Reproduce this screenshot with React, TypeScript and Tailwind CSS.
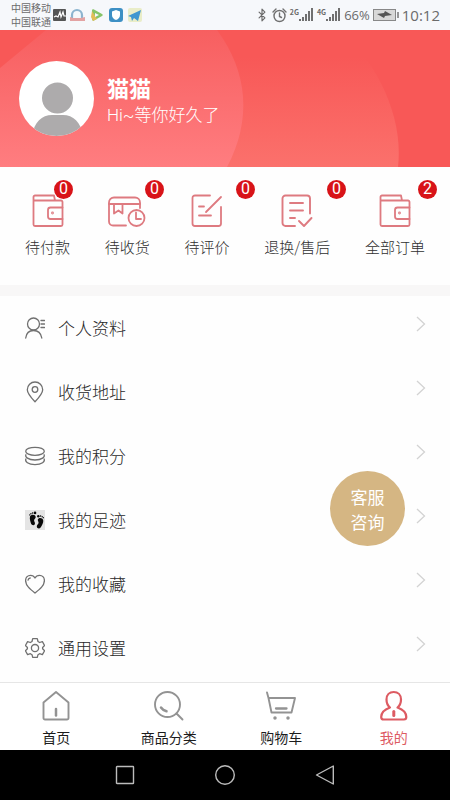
import type { ReactNode } from 'react';
import { Bluetooth } from 'lucide-react';

function WalletIcon() {
  return (
    <svg width="32" height="34" viewBox="0 0 32 34" fill="none" stroke="#de7a80" strokeWidth="1.8" strokeLinejoin="round" strokeLinecap="round">
      <path d="M1.5 6.5V30.500a1.500 1.500 0 0 0 1.500 1.500H29a1.500 1.500 0 0 0 1.500-1.500V8a1.500 1.500 0 0 0-1.500-1.500H1.500V3a1.500 1.500 0 0 1 1.500-1.500H22l1 5" />
      <path d="M30.500 13.500H18.500a2.500 2.500 0 0 0-2.500 2.500v6.500a2.500 2.500 0 0 0 2.500 2.500h12" />
      <circle cx="20.500" cy="19" r="0.500" />
    </svg>
  );
}

function PackageIcon() {
  return (
    <svg width="38" height="34" viewBox="0 0 38 34" fill="none" stroke="#de7a80" strokeWidth="1.8" strokeLinejoin="round" strokeLinecap="round">
      <path d="M18 31.500H5a4 4 0 0 1-4-4V8.500a5 5 0 0 1 5-5h21a5 5 0 0 1 5 5V14" />
      <path d="M1 10h31M6 10v9.500l4.500-3 4 3V10" />
      <circle cx="28.500" cy="24" r="8" />
      <path d="M28 18.500V25h5" />
    </svg>
  );
}

function ReviewIcon() {
  return (
    <svg width="32" height="34" viewBox="0 0 32 34" fill="none" stroke="#de7a80" strokeWidth="1.8" strokeLinejoin="round" strokeLinecap="round">
      <path d="M19 1.500H4A2.500 2.500 0 0 0 1.500 4v25.500A2.500 2.500 0 0 0 4 32h23.500a2.500 2.500 0 0 0 2.500-2.500V13" />
      <path d="M30 3 15 18M8 12.500h5M8 21.500h12" />
    </svg>
  );
}

function RefundIcon() {
  return (
    <svg width="32" height="34" viewBox="0 0 32 34" fill="none" stroke="#de7a80" strokeWidth="1.9" strokeLinejoin="round" strokeLinecap="round">
      <path d="M14 32H4.500A3 3 0 0 1 1.500 29V4.500a3 3 0 0 1 3-3H26a3 3 0 0 1 3 3v15" />
      <path d="M9 9h13M9 16.500h13M9 24h5M18 27l5 5 7.500-8" />
    </svg>
  );
}

function ProfileIcon() {
  return (
    <svg width="20" height="22" viewBox="0 0 20 22" fill="none" stroke="#707070" strokeWidth="1.300" strokeLinecap="round">
      <circle cx="8.500" cy="7" r="6" />
      <path d="M.700 21c.600-4.500 3-7.500 7.800-7.500s7.500 3 8.300 7.500M16 3.500h3.500M16 7h3.500M16 10.500h3.500" />
    </svg>
  );
}

function PinIcon() {
  return (
    <svg width="20" height="22" viewBox="0 0 20 22" fill="none" stroke="#707070" strokeWidth="1.300" strokeLinejoin="round">
      <path d="M10 20.800C6 16.500 2.300 12.500 2.300 8.700a7.700 7.700 0 0 1 15.400 0c0 3.800-3.700 7.800-7.700 12.100Z" />
      <circle cx="10" cy="8.500" r="2.800" />
    </svg>
  );
}

function CoinsIcon() {
  return (
    <svg width="20" height="20" viewBox="0 0 20 20" fill="none" stroke="#707070" strokeWidth="1.300">
      <ellipse cx="10" cy="5.300" rx="9.300" ry="4" />
      <path d="M1.200 8.300C-.800 11 3.500 14 10 14s10.800-3 8.800-5.700" />
      <path d="M1.200 12.500C-.800 15.500 3.500 18.600 10 18.600s10.800-3.100 8.800-6.100" />
    </svg>
  );
}

function FootprintIcon() {
  return (
    <svg width="20" height="20" viewBox="0 0 20 20" fill="#0a0a0a">
      <rect width="20" height="20" fill="#e4e4e4" />
      <path d="M5 6.500c1-2.500 5.500-2.300 5.700.500.100 1.600-1.700 2-1.600 3.600.100 1.300 1.300 2.300.700 3.700-.800 1.600-3.200 1-3.700-.500C5.600 11.900 4.300 9 5 6.500Z" />
      <path d="M18.200 10c-.600-2.600-5-2.800-5.400-.400-.200 1.500 1.200 2.300.700 3.700-.400 1.200-1.900 1.900-1.700 3.500.300 1.900 2.700 2.300 3.800.700 1.200-1.800 3.200-4.800 2.600-7.500Z" />
      <circle cx="10" cy="2.900" r="1.300" />
      <circle cx="7.600" cy="3" r=".8" />
      <circle cx="5.900" cy="3.700" r=".7" />
      <circle cx="4.700" cy="4.900" r=".6" />
      <circle cx="13.300" cy="6.200" r="1.200" />
      <circle cx="15.600" cy="6" r=".8" />
      <circle cx="17.200" cy="6.700" r=".7" />
      <circle cx="18.400" cy="7.700" r=".6" />
    </svg>
  );
}

function HeartIcon() {
  return (
    <svg width="20" height="20" viewBox="0 0 20 20" fill="none" stroke="#707070" strokeWidth="1.300" strokeLinejoin="round" strokeLinecap="round">
      <path d="M10 19C5 15 .600 11.500.600 6.500c0-3 2.200-5.200 4.900-5.200 2 0 3.600 1 4.500 2.700.900-1.700 2.500-2.700 4.500-2.700 2.700 0 4.900 2.200 4.900 5.200C19.400 11.500 15 15 10 19Z" />
      <path d="M3 6.200C3.200 5 4 4.200 5.200 4" />
    </svg>
  );
}

function GearIcon() {
  return (
    <svg width="20" height="20" viewBox="0 0 20 20" fill="none" stroke="#707070" strokeWidth="1.300" strokeLinejoin="round">
      <path d="M7.700.700h4.600l.700 2.800 1.600 1 2.800-.900 2.200 3.900-2 2v1.200l2 2-2.200 3.900-2.800-.900-1.600 1-.700 2.700H7.700L7 16.700l-1.600-1-2.800.900L.400 12.700l2-2V9.500l-2-2 2.200-3.900 2.800.900 1.600-1Z" />
      <circle cx="10" cy="10.100" r="3.600" />
    </svg>
  );
}

function HomeIcon() {
  return (
    <svg width="30" height="32" viewBox="0 0 30 32" fill="none" stroke="#939393" strokeWidth="1.900" strokeLinejoin="round" strokeLinecap="round">
      <path d="M2.500 12.500 15 2l12.500 10.500V28a1.500 1.500 0 0 1-1.500 1.500H4A1.500 1.500 0 0 1 2.500 28Z" />
      <path d="M15 19v6.500" strokeWidth="2.500" />
    </svg>
  );
}

function SearchIcon() {
  return (
    <svg width="30" height="32" viewBox="0 0 30 32" fill="none" stroke="#939393" strokeWidth="1.900" strokeLinecap="round">
      <circle cx="13.500" cy="14.500" r="12.500" />
      <path d="m22.500 23.500 6 6" />
      <path d="M7 17.500c1.200 1.800 3 3 5.500 3.800" strokeWidth="2.500" />
    </svg>
  );
}

function CartIcon() {
  return (
    <svg width="30" height="32" viewBox="0 0 30 32" fill="none" stroke="#939393" strokeWidth="1.900" strokeLinejoin="round" strokeLinecap="round">
      <path d="M1 2.500 2.500 8H29l-3.500 14.500H5.500L2.500 8" />
      <path d="M10 18.500h10.500" strokeWidth="2.300" />
      <circle cx="9" cy="28" r=".8" fill="#939393" />
      <circle cx="22" cy="28" r=".8" fill="#939393" />
    </svg>
  );
}

function MineIcon() {
  return (
    <svg width="30" height="32" viewBox="0 0 30 32" fill="none" stroke="#dd5b62" strokeWidth="2.200" strokeLinejoin="round" strokeLinecap="round">
      <path d="M11 17.500C8.500 15.500 7.500 12.500 7.500 9.500c0-4.500 3-7.500 7.200-7.500S22 5 22 9.500c0 3-1 6-3.500 8 5.500 2 8.800 5.500 8.800 9.500 0 1.700-.800 2.500-2.300 2.500H4.500c-1.500 0-2.300-.800-2.300-2.500 0-4 3.300-7.500 8.800-9.500Z" />
      <path d="M14.800 21.500v4" strokeWidth="3" />
    </svg>
  );
}

const orders = [
  { label: '待付款', count: 0, icon: <WalletIcon /> },
  { label: '待收货', count: 0, icon: <PackageIcon /> },
  { label: '待评价', count: 0, icon: <ReviewIcon /> },
  { label: '退换/售后', count: 0, icon: <RefundIcon /> },
  { label: '全部订单', count: 2, icon: <WalletIcon /> },
];

const menu: { label: string; icon: ReactNode }[] = [
  { label: '个人资料', icon: <ProfileIcon /> },
  { label: '收货地址', icon: <PinIcon /> },
  { label: '我的积分', icon: <CoinsIcon /> },
  { label: '我的足迹', icon: <FootprintIcon /> },
  { label: '我的收藏', icon: <HeartIcon /> },
  { label: '通用设置', icon: <GearIcon /> },
];

const tabs = [
  { label: '首页', icon: <HomeIcon />, active: false },
  { label: '商品分类', icon: <SearchIcon />, active: false },
  { label: '购物车', icon: <CartIcon />, active: false },
  { label: '我的', icon: <MineIcon />, active: true },
];

function Signal({ network }: { network: string }) {
  return (
    <div className="flex items-start">
      <span className="text-[7px] font-bold leading-[8px]">{network}</span>
      <svg width="15" height="14" viewBox="0 0 15 14" fill="#707070">
        <rect x="0" y="11" width="2" height="2" />
        <rect x="3" y="9" width="2" height="4" />
        <rect x="6" y="6" width="2" height="7" />
        <rect x="9" y="3" width="2" height="10" />
        <rect x="12" y="0" width="2" height="13" />
      </svg>
    </div>
  );
}

function StatusBar() {
  return (
    <div className="flex h-[30px] items-center justify-between bg-[#f6f8fb] pl-[11px] pr-[10px] text-[#6b6b6b]">
      <div className="flex items-center gap-[2px]">
        <div className="text-[10px] leading-[14px]">
          <p>中国移动</p>
          <p>中国联通</p>
        </div>
        <svg width="92" height="16" viewBox="0 0 92 16" fill="none">
          <rect x="0" y="2" width="13" height="12" rx="1" fill="#555" />
          <path d="m1 10 2-1 2 1 2-5 1 5 2-5 1 4h2" stroke="#fff" strokeWidth="1.200" />
          <path d="M19 11V8a5 5 0 0 1 10 0v3" stroke="#8db4cf" strokeWidth="2.200" />
          <path d="m17 10 3 1 8 0 4-1v4H17Z" fill="#e3a3a3" />
          <path d="M39 3.500c0-1 1-1.500 2-1l8 4.500c1 .500 1 1.500 0 2l-8 4.500c-1 .500-2 0-2-1Z" fill="#86c468" />
          <path d="M39 4 38 10l2 4 4-2" fill="#e2bd57" />
          <path d="M42 6v4l4-2Z" fill="#f6f8fb" />
          <rect x="56" y="1" width="14" height="14" rx="3" fill="#3c8fc4" />
          <path d="m63 3 4 1.500V8c0 2.500-1.500 4-4 5-2.500-1-4-2.500-4-5V4.500Z" fill="#fff" />
          <rect x="75" y="1" width="14" height="14" rx="2" fill="#e9edc8" />
          <path d="m75 9 13-6-3 11-4-3-2 3-1-4Z" fill="#3f97d0" />
        </svg>
      </div>
      <div className="flex items-center gap-[3px]">
        <Bluetooth size={14} strokeWidth={2} />
        <svg width="15" height="15" viewBox="0 0 15 15" fill="none" stroke="#707070" strokeWidth="1.400" strokeLinecap="round">
          <circle cx="7.500" cy="8" r="5.500" />
          <path d="M7.500 5v3.500l2 1M1 4l3-3M14 4l-3-3" />
        </svg>
        <Signal network="2G" />
        <Signal network="4G" />
        <span className="font-['Open_Sans','Noto_Sans_CJK_SC',sans-serif] text-[13px] leading-4">66%</span>
        <svg width="26" height="12" viewBox="0 0 26 12" fill="none">
          <rect x=".500" y=".500" width="22" height="11" fill="#d8d8d8" stroke="#888" />
          <path d="m4 5 7-1 1-2 7 4-7 1-1 2Z" fill="#555" />
          <path d="M25 3v6" stroke="#777" strokeWidth="1.500" />
        </svg>
        <span className="font-['Open_Sans','Noto_Sans_CJK_SC',sans-serif] text-[15px] leading-4">10:12</span>
      </div>
    </div>
  );
}

function ProfileHeader() {
  return (
    <header className="relative h-[137px] bg-[#f85857] text-white">
      <svg className="absolute inset-0 h-full w-full" viewBox="0 0 450 137" preserveAspectRatio="none">
        <defs>
          <linearGradient id="near" x1="0" y1="0" x2="0" y2="1">
            <stop offset="0" stopColor="#f75f60" />
            <stop offset="1" stopColor="#ff7d80" />
          </linearGradient>
          <linearGradient id="far" x1="0" y1="0" x2="0" y2="1">
            <stop offset="0.200" stopColor="#f85857" />
            <stop offset="1" stopColor="#fb716c" />
          </linearGradient>
        </defs>
        <path d="M220 0H340C375 30 404 85 398 137H220Z" fill="url(#far)" />
        <path d="M0 38 46 0H217C248 42 252 90 227 137H0Z" fill="url(#near)" />
      </svg>
      <div className="relative flex items-start gap-[13px] pl-[19px] pt-[31px]">
        <svg width="75" height="75" viewBox="0 0 75 75">
          <defs>
            <clipPath id="avatar">
              <circle cx="37.500" cy="37.500" r="37.500" />
            </clipPath>
          </defs>
          <g clipPath="url(#avatar)">
            <rect width="75" height="75" fill="#fff" />
            <circle cx="38.500" cy="37" r="15.500" fill="#adabac" />
            <path d="M13 75c2-14 10-21 20-21h11c10 0 18 7 20 21Z" fill="#adabac" />
          </g>
        </svg>
        <div className="pt-3">
          <h1 className="text-[22px] font-bold leading-7">猫猫</h1>
          <p className="font-[Roboto,'Noto_Sans_CJK_SC',sans-serif] text-[17px] font-light leading-7">Hi~等你好久了</p>
        </div>
      </div>
    </header>
  );
}

function OrderBar() {
  return (
    <section className="relative pb-[26px] pt-[27px]">
      <div className="flex justify-between px-[25px]">
        {orders.map((order) => (
          <button key={order.label} type="button" className="flex flex-col items-center gap-[7px] text-[15px] font-light leading-6 text-[#303030]">
            {order.icon}
            {order.label}
          </button>
        ))}
      </div>
      {/* Order counters */}
      <div className="pointer-events-none absolute inset-x-0 top-[13px] flex justify-between pl-[54px] pr-[13px]">
        {orders.map((order) => (
          <span key={order.label} className="flex size-[19px] justify-center rounded-full bg-[#d81318] font-[Roboto,sans-serif] text-[16px] leading-[18px] text-white">
            {order.count}
          </span>
        ))}
      </div>
    </section>
  );
}

function Menu() {
  return (
    <section className="relative flex-1">
      <ul>
        {menu.map((item) => (
          <li key={item.label}>
            <a href="#" className="flex h-16 items-center pl-[25px] pr-6 text-[17px] font-light text-[#282828]">
              <span className="mr-[13px] flex w-5 justify-center">{item.icon}</span>
              <span className="flex-1">{item.label}</span>
              <svg className="mb-[9px]" width="10" height="16" viewBox="0 0 10 16" fill="none" stroke="#d3d3d3" strokeWidth="1.300">
                <path d="m1 1 7.500 7L1 15" />
              </svg>
            </a>
          </li>
        ))}
      </ul>
      <button type="button" className="absolute right-[45px] top-[175px] size-[75px] rounded-full bg-[#d5b683] text-[17px] leading-[25px] text-white">
        客服
        <br />
        咨询
      </button>
    </section>
  );
}

export default function App() {
  return (
    <div className="flex min-h-screen flex-col bg-[#fefefe] font-['Noto_Sans_CJK_SC',sans-serif]">
      <StatusBar />
      <ProfileHeader />
      <OrderBar />
      <div className="h-[11px] bg-[#f8f7f7]" />
      <Menu />
      <nav className="grid h-[68px] grid-cols-4 border-t border-[#e6e6e6] bg-white">
        {tabs.map((tab) => (
          <a
            key={tab.label}
            href="#"
            className={`flex flex-col items-center gap-[3px] pt-[7px] text-[14px] leading-6 ${tab.active ? 'text-[#dd5b62]' : 'text-[#1c1c1c]'}`}
          >
            {tab.icon}
            {tab.label}
          </a>
        ))}
      </nav>
      {/* System navigation */}
      <div className="flex h-[50px] items-center justify-center gap-20 bg-black">
        <button type="button" aria-label="Recent">
          <svg width="20" height="20" viewBox="0 0 20 20" fill="none" stroke="#bcbcbc" strokeWidth="1.400">
            <rect x="1.500" y="1.500" width="17" height="17" rx=".5" />
          </svg>
        </button>
        <button type="button" aria-label="Home">
          <svg width="20" height="20" viewBox="0 0 20 20" fill="none" stroke="#bcbcbc" strokeWidth="1.400">
            <circle cx="10" cy="10" r="9.300" />
          </svg>
        </button>
        <button type="button" aria-label="Back">
          <svg width="20" height="20" viewBox="0 0 20 20" fill="none" stroke="#bcbcbc" strokeWidth="1.400" strokeLinejoin="round">
            <path d="M18.300 1v18L1.500 10Z" />
          </svg>
        </button>
      </div>
    </div>
  );
}
